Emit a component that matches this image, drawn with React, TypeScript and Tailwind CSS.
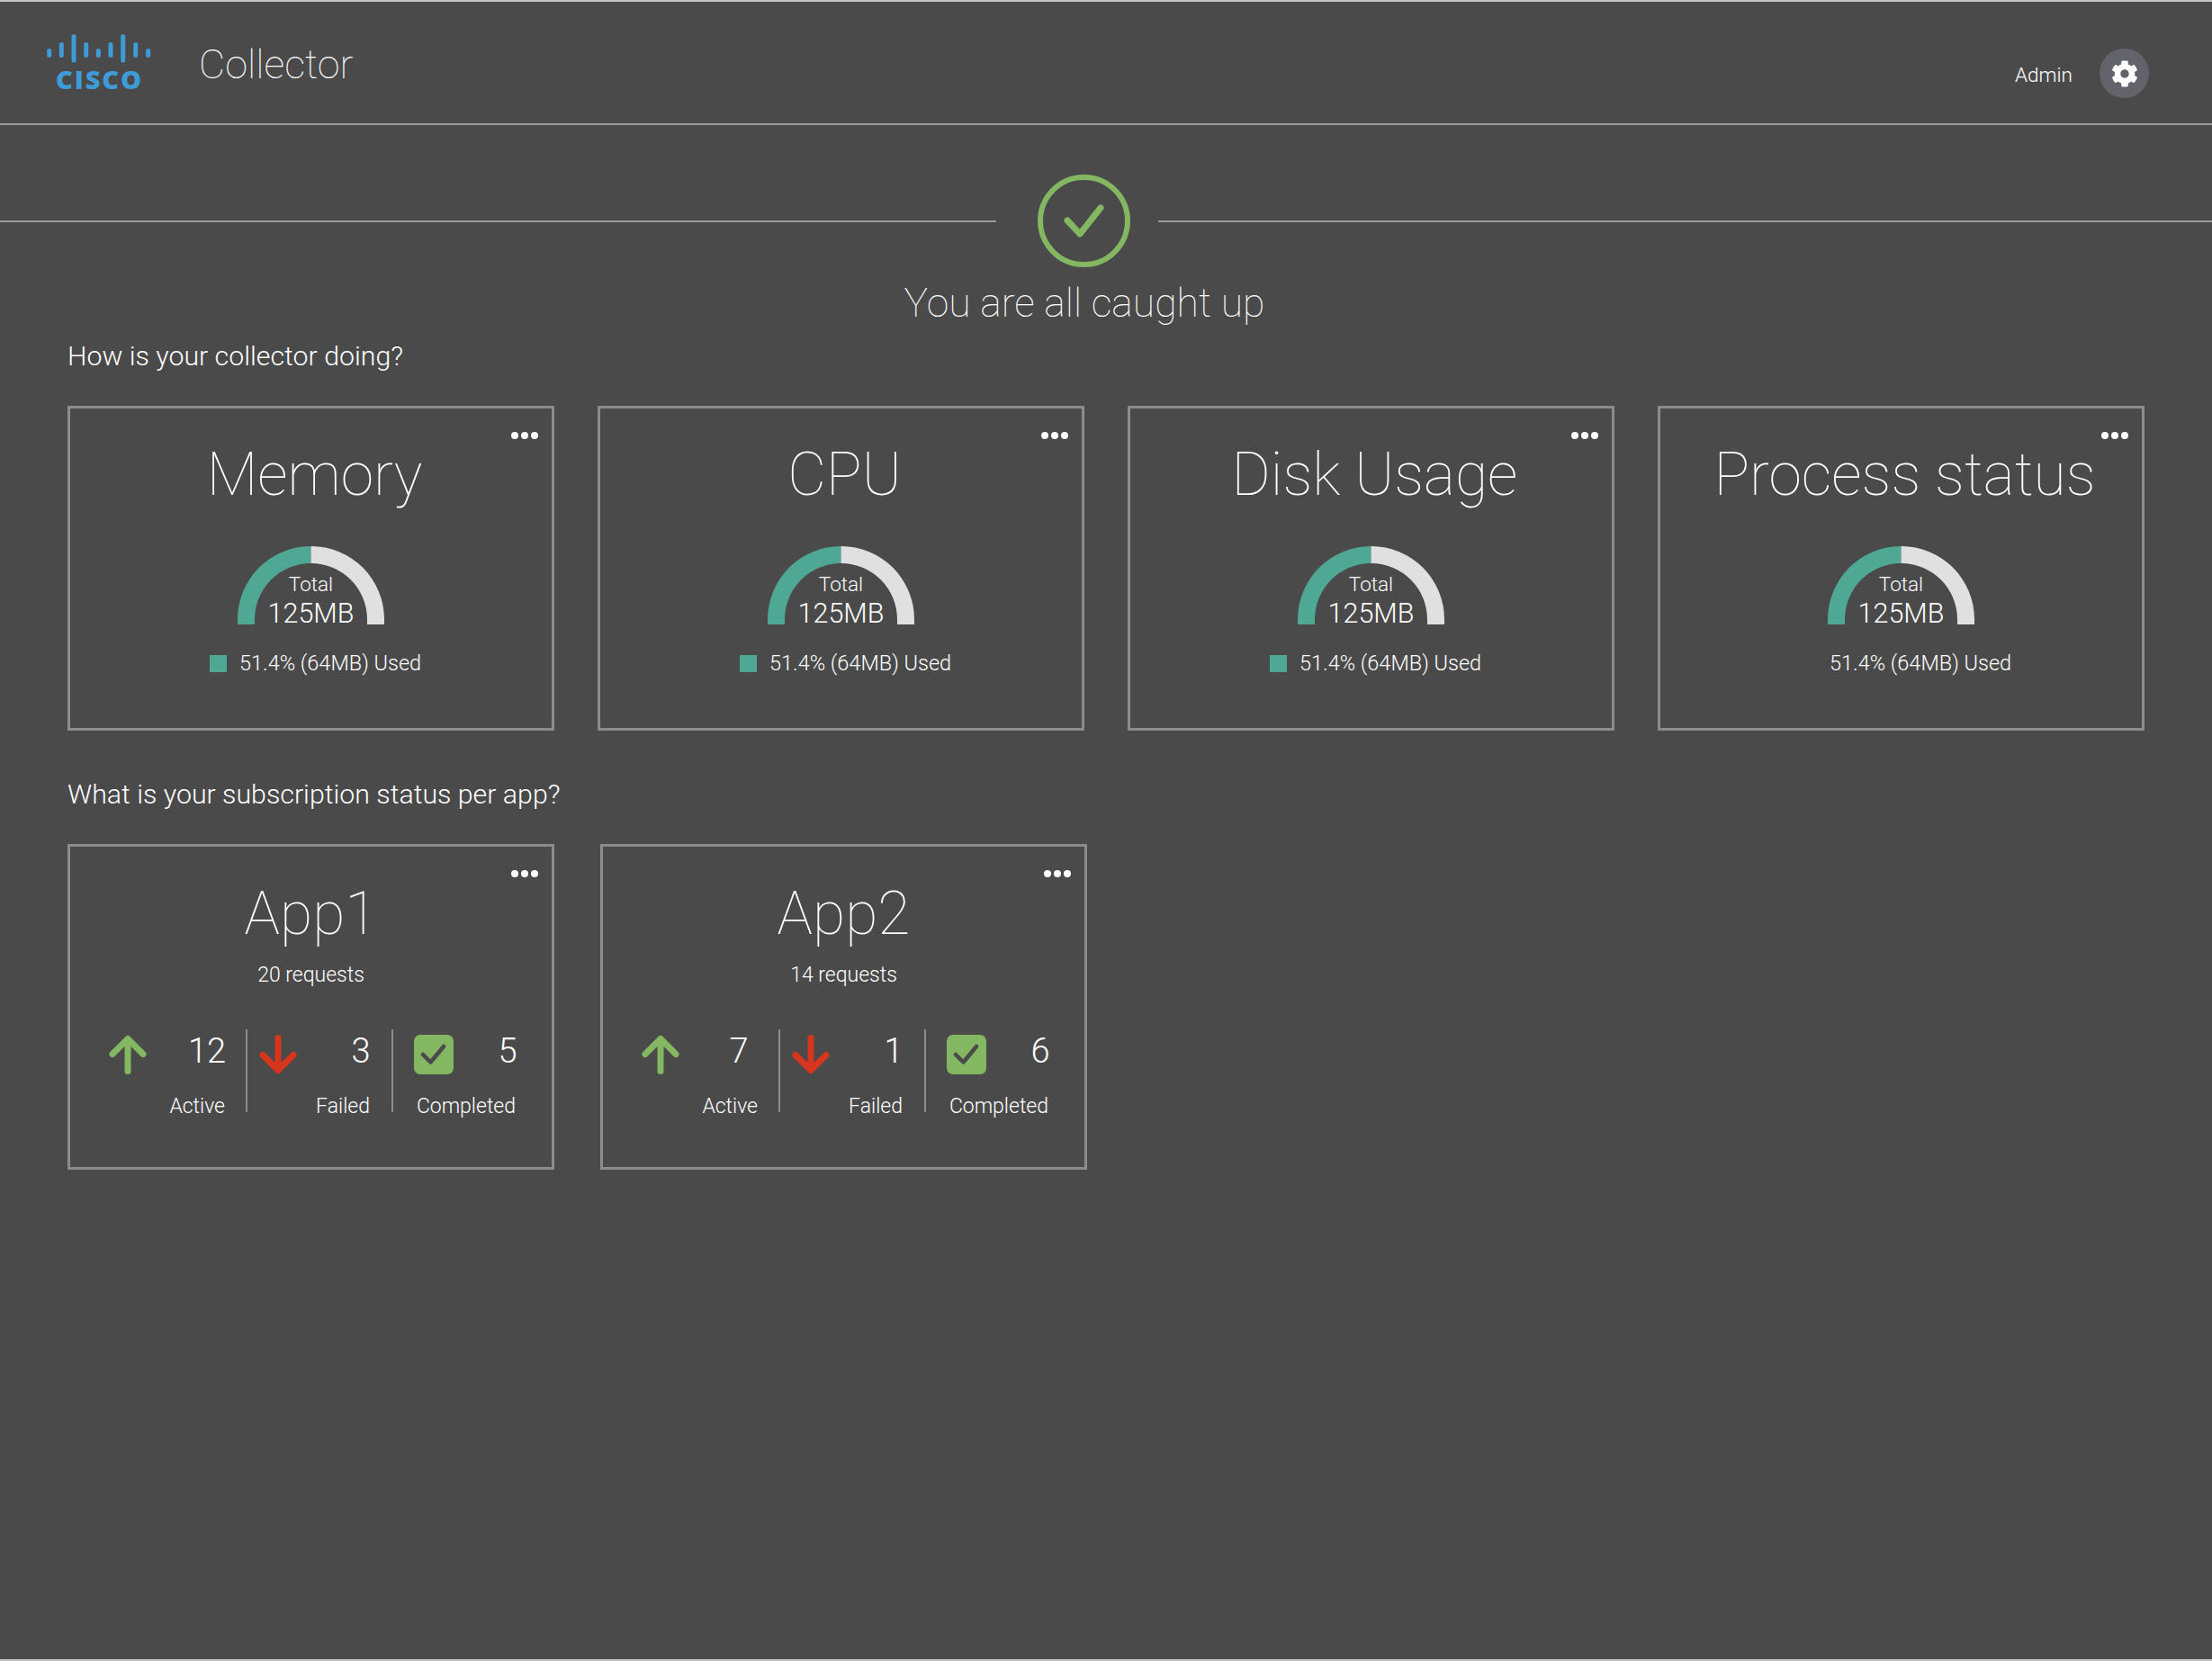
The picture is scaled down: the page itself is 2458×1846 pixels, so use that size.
import { FaCog } from "react-icons/fa";

const font = "font-['Roboto',sans-serif]";

function Dots() {
  return (
    <div className="absolute right-[15px] top-[26px] flex gap-[3px]">
      <span className="w-[8px] h-[8px] rounded-full bg-white" />
      <span className="w-[8px] h-[8px] rounded-full bg-white" />
      <span className="w-[8px] h-[8px] rounded-full bg-white" />
    </div>
  );
}

function CiscoLogo() {
  const bars = [
    [54.7, 54, 64], [68.3, 47, 64], [82, 38, 69.5], [95.7, 47, 64], [109.3, 54, 64],
    [123, 47, 64], [136.7, 38, 69.5], [150.7, 47, 64], [164.7, 54, 64],
  ];
  return (
    <svg width="125" height="76" viewBox="50 36 125 76" className="shrink-0 mt-[8px]">
      {bars.map(([x, y1, y2], i) => (
        <line key={i} x1={x} x2={x} y1={y1 + 2.5} y2={y2 - 2.5} stroke="#3f9bd8" strokeWidth="5" strokeLinecap="round" />
      ))}
      <text x="62" y="99" fill="#3f9bd8" fontFamily="'Open Sans', sans-serif" fontWeight="800" fontSize="29" textLength="95" lengthAdjust="spacing">CISCO</text>
    </svg>
  );
}

function Gauge() {
  return (
    <div className="relative w-[163px] h-[87px] mx-auto">
      <svg width="163" height="87" viewBox="0 0 163 87" className="block">
        <path d="M0 87V81.5A81.5 81.5 0 0 1 81.5 0V19A62.5 62.5 0 0 0 19 81.5V87Z" fill="#4fa893" />
        <path d="M163 87V81.5A81.5 81.5 0 0 0 81.5 0V19A62.5 62.5 0 0 1 144 81.5V87Z" fill="#e0e0e0" />
      </svg>
      <div className="absolute left-0 right-0 top-[29px] text-center text-white text-[22.5px] leading-[26px] font-light">Total</div>
      <div className="absolute left-0 right-0 top-[57px] text-center text-white text-[30.5px] leading-[36px] font-light">125MB</div>
    </div>
  );
}

function ResourceCard({ title, swatch = true }: { title: string; swatch?: boolean }) {
  return (
    <div className="relative h-[361px] border-[3px] border-[#8c8c8c] pt-[34px]">
      <Dots />
      <h3 className="text-center text-white text-[66px] leading-[80px] font-thin pl-[8px]">{title}</h3>
      <div className="mt-[39px]">
        <Gauge />
      </div>
      <div className="mt-[28px] flex items-center pl-[155px] text-white text-[23.5px] leading-[30px] font-light">
        <span className={swatch ? "w-[19px] h-[19px] bg-[#4fa893]" : "w-[19px] h-[19px]"} />
        <span className="ml-[14px]">51.4% (64MB) Used</span>
      </div>
    </div>
  );
}

function ArrowUp() {
  return (
    <svg width="42" height="44" viewBox="0 0 42 44" className="shrink-0">
      <path d="M21 40.5V4.5M4 21.5L21 4.5L38 21.5" fill="none" stroke="#84b761" strokeWidth="7" strokeLinecap="round" strokeLinejoin="round" />
    </svg>
  );
}

function ArrowDown() {
  return (
    <svg width="42" height="44" viewBox="0 0 42 44" className="shrink-0">
      <path d="M21 3.5V39.5M4 22.5L21 39.5L38 22.5" fill="none" stroke="#d7351d" strokeWidth="7" strokeLinecap="round" strokeLinejoin="round" />
    </svg>
  );
}

function CheckBox() {
  return (
    <div className="w-[44px] h-[44px] rounded-[7px] bg-[#84b761] flex items-center justify-center shrink-0">
      <svg width="30" height="26" viewBox="0 0 30 26">
        <path d="M3 13L11.5 21.5L26 4" fill="none" stroke="#4a4a4a" strokeWidth="4.5" strokeLinecap="round" strokeLinejoin="round" />
      </svg>
    </div>
  );
}

function Stat({ icon, value, label, className, numberLeft }: { icon: React.ReactNode; value: number; label: string; className: string; numberLeft: string }) {
  return (
    <div className={className}>
      <div className="flex h-[52px] pt-[6px]">
        {icon}
        <div className={numberLeft + " w-[40px] shrink-0 text-center text-white text-[38px] leading-[36px] font-light"}>{value}</div>
      </div>
      <div className="mt-[20px] text-right text-white text-[23px] leading-[28px] font-light">{label}</div>
    </div>
  );
}

function AppCard({ title, requests, active, failed, completed }: { title: string; requests: string; active: number; failed: number; completed: number }) {
  return (
    <div className="relative w-[541px] h-[362px] border-[3px] border-[#8c8c8c] pt-[35px]">
      <Dots />
      <h3 className="text-center text-white text-[66px] leading-[80px] font-thin">{title}</h3>
      <p className="mt-[13px] text-center text-white text-[23px] leading-[30px] font-light">{requests}</p>
      <div className="mt-[45px] ml-[43px] flex">
        <Stat icon={<ArrowUp />} value={active} label="Active" numberLeft="ml-[46px]" className="w-[154px] h-[92px] border-r-2 border-[#8c8c8c] pr-[23px]" />
        <Stat icon={<ArrowDown />} value={failed} label="Failed" numberLeft="ml-[51px]" className="w-[162px] h-[92px] border-r-2 border-[#8c8c8c] pl-[13px] pr-[24px]" />
        <Stat icon={<CheckBox />} value={completed} label="Completed" numberLeft="ml-[40px]" className="w-[136px] h-[92px] pl-[23px] whitespace-nowrap" />
      </div>
    </div>
  );
}

export default function App() {
  return (
    <div className={font + " relative w-[2458px] h-[1846px] bg-[#4a4a4a] border-t-2 border-b-2 border-[#c4c4c4] overflow-hidden"}>
      <header className="h-[137px] flex items-center border-b-2 border-[#999999] pl-[50px]">
        <CiscoLogo />
        <span className="ml-[46px] mt-[4px] text-white text-[45px] leading-[56px] font-thin">Collector</span>
        <div className="ml-auto mr-[70px] flex items-center pt-[24px]">
          <span className="mt-[4px] text-white text-[22.5px] font-light">Admin</span>
          <div className="ml-[30px] w-[55px] h-[55px] rounded-full bg-[#63646b] flex items-center justify-center">
            <FaCog className="text-white text-[30px]" />
          </div>
        </div>
      </header>

      <div className="mt-[55px] flex items-center">
        <div className="w-[1107px] h-[2px] bg-[#999999]" />
        <div className="ml-[46px] mr-[31px] w-[103px] h-[103px] rounded-full border-[6px] border-[#84b761] flex items-center justify-center">
          <svg width="50" height="42" viewBox="0 0 50 42">
            <path d="M6 20L20 35L43 6" fill="none" stroke="#84b761" strokeWidth="7" strokeLinecap="round" strokeLinejoin="round" />
          </svg>
        </div>
        <div className="flex-1 h-[2px] bg-[#999999]" />
      </div>
      <p className="w-[2410px] mt-[14px] text-center text-white text-[44.5px] leading-[52px] font-thin">You are all caught up</p>

      <main className="px-[75px]">
        <h2 className="mt-[15px] text-white text-[30.3px] leading-[36px] font-light">How is your collector doing?</h2>
        <div className="mt-[37px] grid grid-cols-4 gap-[48px]">
          <ResourceCard title="Memory" />
          <ResourceCard title="CPU" />
          <ResourceCard title="Disk Usage" />
          <ResourceCard title="Process status" swatch={false} />
        </div>
        <h2 className="mt-[53px] text-white text-[30.3px] leading-[36px] font-light">What is your subscription status per app?</h2>
        <div className="mt-[37px] flex gap-[51px]">
          <AppCard title="App1" requests="20 requests" active={12} failed={3} completed={5} />
          <AppCard title="App2" requests="14 requests" active={7} failed={1} completed={6} />
        </div>
      </main>
    </div>
  );
}
